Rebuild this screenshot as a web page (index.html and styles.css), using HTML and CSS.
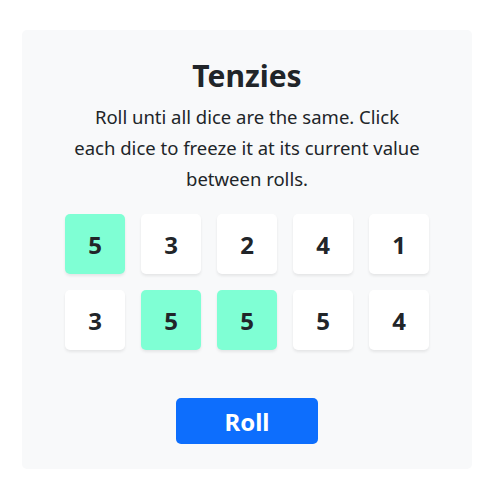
FILE: index.html
```html
<!DOCTYPE html>
<html lang="en">
<head>
<meta charset="utf-8">
<title>Tenzies</title>
<link rel="stylesheet" href="styles.css">
</head>
<body>
<main class="board">
  <h1 class="title">Tenzies</h1>
  <p class="instructions">Roll unti all dice are the same. Click each dice to freeze it at its current value between rolls.</p>
  <div class="dice">
    <button class="die held">5</button>
    <button class="die">3</button>
    <button class="die">2</button>
    <button class="die">4</button>
    <button class="die">1</button>
    <button class="die">3</button>
    <button class="die held">5</button>
    <button class="die held">5</button>
    <button class="die">5</button>
    <button class="die">4</button>
  </div>
  <button class="roll">Roll</button>
</main>
</body>
</html>
```
FILE: styles.css
```css
* { box-sizing: border-box; }
body {
  margin: 0;
  background: #fff;
  font-family: "Noto Sans", "Open Sans", sans-serif;
  color: #212529;
}
.board {
  width: 450px;
  margin: 30px 0 0 22px;
  height: 439px;
  background: #f8f9fa;
  border-radius: 5px;
  display: flex;
  flex-direction: column;
  align-items: center;
  padding-top: 28px;
}
.title {
  margin: 0;
  font-size: 30px;
  line-height: 1.2;
  font-weight: 700;
}
.instructions {
  margin: 7px 0 0;
  width: 350px;
  text-align: center;
  font-size: 18.5px;
  line-height: 31px;
}
.dice {
  margin-top: 20px;
  display: grid;
  grid-template-columns: repeat(5, 60px);
  grid-auto-rows: 60px;
  gap: 16px;
}
.die {
  border: none;
  border-radius: 5px;
  background: #fff;
  box-shadow: 0 2px 3px rgba(0,0,0,0.08);
  font-family: inherit;
  font-size: 24px;
  font-weight: 700;
  color: #212529;
  padding: 0;
}
.die.held { background: #7fffd4; }
.roll {
  margin-top: 48px;
  width: 142px;
  height: 46px;
  border: none;
  border-radius: 5px;
  background: #0d6efd;
  color: #fff;
  font-family: inherit;
  font-size: 24px;
  font-weight: 700;
  padding: 0;
}
```
